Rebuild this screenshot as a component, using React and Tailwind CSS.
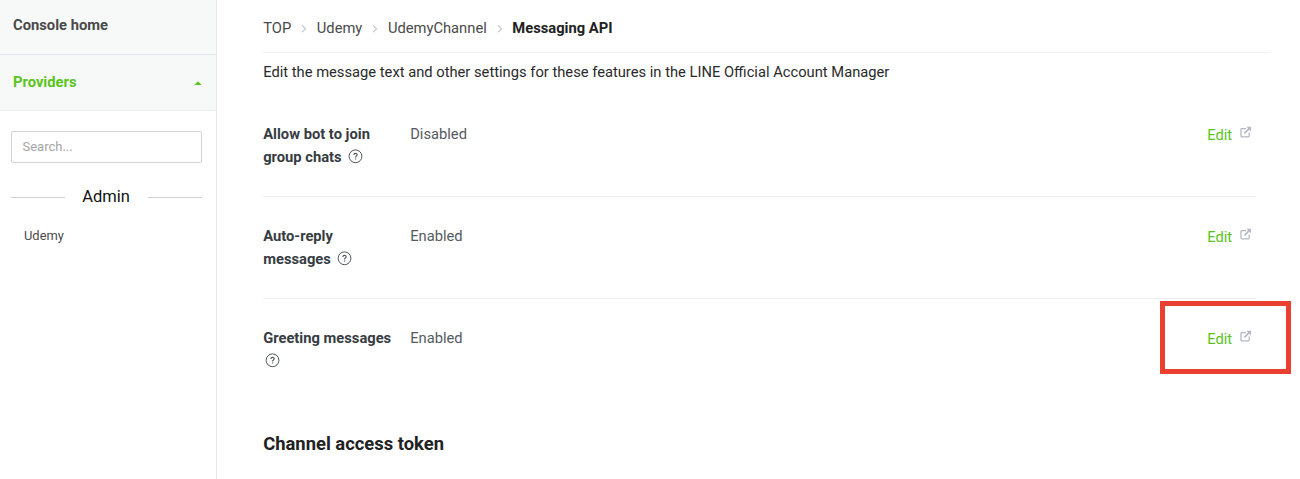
import React from "react";

const crumbs = ["TOP", "Udemy", "UdemyChannel"];

const settings = [
  { lines: ["Allow bot to join", "group chats"], value: "Disabled" },
  { lines: ["Auto-reply", "messages"], value: "Enabled" },
  { lines: ["Greeting messages", ""], value: "Enabled", highlight: true },
];

function HelpIcon({ first }) {
  return (
    <svg className={first ? "ml-[2px] -mt-px" : "ml-[6px] -mt-px"} width="15" height="15" viewBox="0 0 15 15" fill="none" stroke="#50565c">
      <circle cx="7.5" cy="7.3" r="6.4" strokeWidth="1" />
      <path d="M5.9 6c0-2.2 3.3-2.1 3.3-.2 0 1.2-1.6 1.3-1.6 2.6" strokeWidth="1.1" />
      <path d="M7.6 9.4v1.2" strokeWidth="1.2" />
    </svg>
  );
}

function ExternalIcon() {
  return (
    <svg width="12" height="12" viewBox="0 0 12 12" fill="none" stroke="#b3b9c4" strokeWidth="1.3">
      <path d="M6 2.6H1.7q-.7 0-.7.7v6.8q0 .7.7.7h6.8q.7 0 .7-.7V6.4" />
      <path d="M4.4 7.4 9.6 2.2" strokeWidth="1.7" />
      <path d="M6.4.8H11v4.6z" fill="#b3b9c4" stroke="none" />
    </svg>
  );
}

function Sidebar() {
  return (
    <aside className="w-[217px] h-[479px] shrink-0 border-r border-[#e4e8ee] bg-white">
      <div className="h-[55px] border-b border-[#e1e6ec] bg-[#f7f9f9] pl-[13px] pt-[15px] text-[14.75px] leading-[20px] font-bold text-[#4a4a4a]">
        Console home
      </div>
      <div className="flex h-[56px] justify-between border-b border-[#eaeef0] bg-[#f7f9f9] pl-[13px] pr-[14px] pt-[17px] text-[14.75px] leading-[20px] font-bold text-[#5ac41c]">
        Providers
        <svg className="mt-[9px]" width="8" height="5" viewBox="0 0 8 5">
          <path d="M.4 4 4 .2 7.6 4z" fill="#5ac41c" />
        </svg>
      </div>
      <div className="ml-[11px] mt-[20px] flex h-[32px] w-[191px] items-center rounded-[2px] border border-[#d0d3d9] pl-[10.5px] text-[13px] text-[#a5a5a5]">
        Search...
      </div>
      <div className="ml-[11px] mt-[23px] flex w-[191px] items-center justify-between text-[16.5px] leading-[22px] text-[#111]">
        <span className="h-px w-[54px] bg-[#cfd2d5]" />
        <span className="-ml-px">Admin</span>
        <span className="h-px w-[54px] bg-[#cfd2d5]" />
      </div>
      <div className="pl-[24px] pt-[18px] text-[12.9px] leading-[20px] text-[#4a4a4a]">Udemy</div>
    </aside>
  );
}

function SettingRow({ item }) {
  return (
    <div className="relative flex h-[102px] w-[993px] pt-[28px] text-[14.72px] leading-[22.5px]">
      <div className="w-[147px] shrink-0 font-bold text-[#363c42]">
        {item.lines.map((line, i) => (
          <div key={i} className="flex h-[22.5px] items-center whitespace-nowrap">
            {line}
            {i === 1 && <HelpIcon first={!line} />}
          </div>
        ))}
      </div>
      <div className="flex-1 text-[#555a60]">{item.value}</div>
      <div className="flex w-[49px]">
        <span className="mt-px text-[#5ac41c]">Edit</span>
        <span className="ml-[8px] mt-[3px]"><ExternalIcon /></span>
      </div>
      {item.highlight && (
        <div className="absolute left-[897px] top-[2px] h-[73px] w-[131px] border-[5px] border-[#ea4031]" />
      )}
    </div>
  );
}

export default function App() {
  return (
    <div className="flex h-[479px] w-[1300px] overflow-hidden bg-white font-['Roboto',sans-serif]">
      <Sidebar />
      <main className="flex-1 pl-[46.2px]">
        <nav className="flex h-[53px] w-[1007px] items-start border-b border-[#f0f1f2] pt-[18px] text-[14.72px] leading-[20px] text-[#4a4a4a]">
          {crumbs.map((c) => (
            <span key={c} className="flex items-center">
              {c}
              <svg className="mx-[9.8px]" width="6" height="9" viewBox="0 0 6 9" fill="none" stroke="#c6cbd4" strokeWidth="1.2">
                <path d="m1 1.2 3.6 3.5L1 8.2" />
              </svg>
            </span>
          ))}
          <span className="font-bold text-[#222]">Messaging API</span>
        </nav>
        <p className="pt-[9px] text-[14.72px] leading-[20px] text-[#2a2a2a]">
          Edit the message text and other settings for these features in the LINE Official Account Manager
        </p>
        <div className="mt-[13px]">
          {settings.map((item, i) => (
            <div key={i}>
              {i > 0 && <div className="-mt-px h-px w-[993px] bg-[#edeff0]" />}
              <SettingRow item={item} />
            </div>
          ))}
        </div>
        <h2 className="mt-[30px] text-[18.4px] leading-[26px] font-bold text-[#222]">Channel access token</h2>
      </main>
    </div>
  );
}
